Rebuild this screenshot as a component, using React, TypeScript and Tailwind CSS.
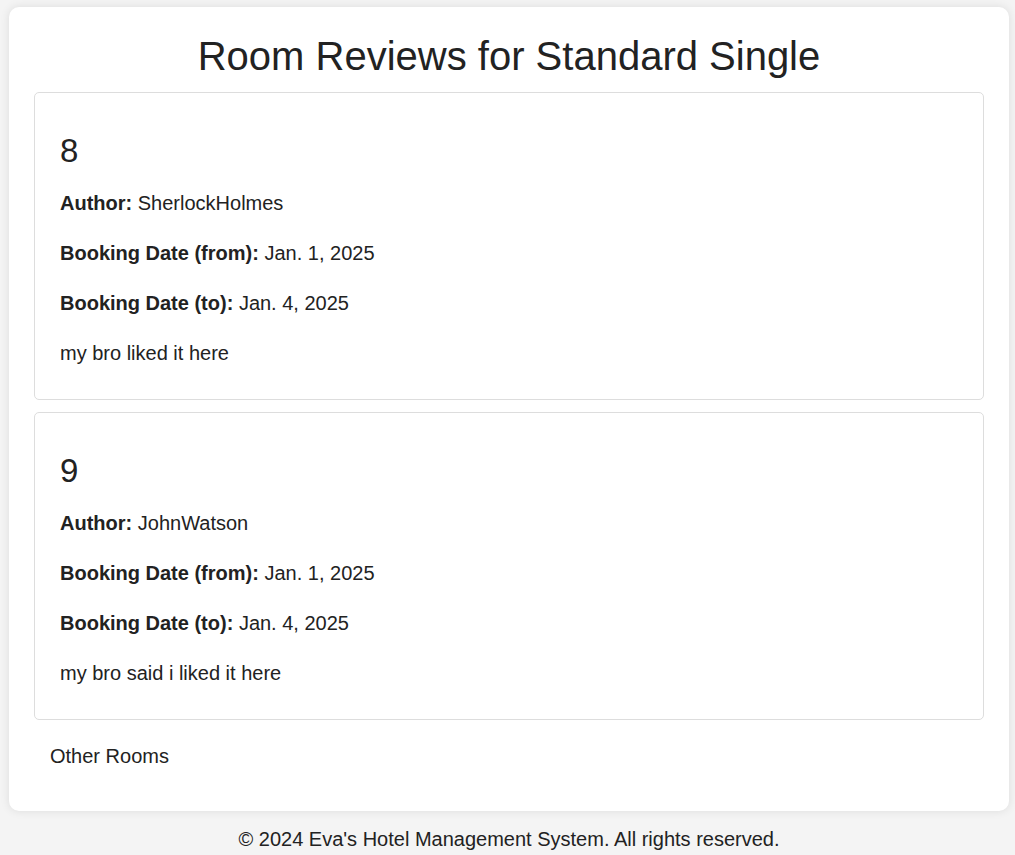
import React from "react";

const reviews = [
  { rating: "8", author: "SherlockHolmes", from: "Jan. 1, 2025", to: "Jan. 4, 2025", text: "my bro liked it here" },
  { rating: "9", author: "JohnWatson", from: "Jan. 1, 2025", to: "Jan. 4, 2025", text: "my bro said i liked it here" },
];

export default function App() {
  return (
    <div
      className="min-h-[855px] bg-[#f4f4f4] pt-[7px] text-[#222222]"
      style={{ fontFamily: '"Liberation Sans", Arial, sans-serif' }}
    >
      <div className="ml-[9px] w-[1000px] rounded-[10px] bg-white px-[25px] pt-[25px] pb-[40px] shadow-[0_0_10px_rgba(0,0,0,0.1)]">
        <h1 className="text-center text-[40px] leading-[48px] font-normal">Room Reviews for Standard Single</h1>
        <div className="mt-[12px] flex flex-col gap-[12px]">
          {reviews.map((r) => (
            <div key={r.rating} className="rounded-[5px] border border-[#dddddd] px-[25px] pt-[38px] pb-[31px]">
              <h3 className="text-[33px] leading-[40px] font-normal">{r.rating}</h3>
              <div className="mt-[17px] flex flex-col gap-[20px] text-[20px] leading-[30px]">
                <p><strong className="font-bold">Author:</strong> {r.author}</p>
                <p><strong className="font-bold">Booking Date (from):</strong> {r.from}</p>
                <p><strong className="font-bold">Booking Date (to):</strong> {r.to}</p>
                <p>{r.text}</p>
              </div>
            </div>
          ))}
        </div>
        <div className="mt-[21px] pl-[16px] text-[20px] leading-[30px]">
          <a className="text-[#222222]">Other Rooms</a>
        </div>
      </div>
      <footer className="ml-[9px] w-[1000px] pt-[13px] text-center text-[20px] leading-[30px]">
        © 2024 Eva's Hotel Management System. All rights reserved.
      </footer>
    </div>
  );
}
